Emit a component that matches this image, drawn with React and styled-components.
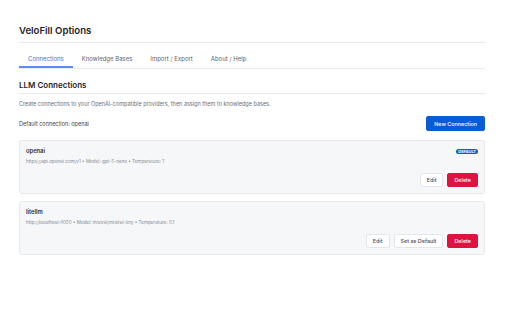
import React from 'react';
import styled, { createGlobalStyle } from 'styled-components';

const GlobalStyle = createGlobalStyle`
  body {
    margin: 0;
    background: #ffffff;
    font-family: Inter, "Noto Sans", "Liberation Sans", sans-serif;
    color: #1f2328;
  }
`;

const Page = styled.div`
  padding: 25px 27px 0 19px;
`;

const Title = styled.h1`
  margin: 0;
  font-size: 9.6px;
  line-height: 12px;
  font-weight: 600;
  color: #1f2328;
  padding-bottom: 5px;
  border-bottom: 1px solid #e8eaed;
`;

const Tabs = styled.nav`
  display: flex;
  margin-top: 8px;
  border-bottom: 1px solid #e8eaed;
`;

const Tab = styled.button`
  border: none;
  background: none;
  font-family: inherit;
  font-size: 6px;
  line-height: 8px;
  padding: 4px 9px 3px;
  color: ${(p) => (p.$active ? '#3b73e6' : '#5f6368')};
  border-bottom: 2px solid ${(p) => (p.$active ? '#5b8def' : 'transparent')};
  cursor: pointer;
`;

const Heading = styled.h2`
  margin: 11px 0 0;
  font-size: 8px;
  line-height: 10px;
  font-weight: 600;
  color: #1f2328;
  padding-bottom: 3px;
  border-bottom: 1px solid #e8eaed;
`;

const Description = styled.p`
  margin: 6px 0 0;
  font-size: 5.5px;
  line-height: 8px;
  color: #6b7078;
`;

const DefaultRow = styled.div`
  display: flex;
  align-items: center;
  justify-content: space-between;
  margin-top: 8px;
`;

const DefaultLabel = styled.span`
  font-size: 5.5px;
  color: #3c4046;
`;

const Button = styled.button`
  height: ${(p) => (p.$tall ? '15px' : '14px')};
  padding: 0 ${(p) => (p.$tall ? '7px' : '6px')};
  border-radius: 2px;
  font-family: inherit;
  font-size: 5.4px;
  font-weight: 500;
  cursor: pointer;
  border: 1px solid
    ${(p) =>
      p.$variant === 'primary' ? '#0a5bd8' : p.$variant === 'danger' ? '#e0123f' : '#e3e6ea'};
  background: ${(p) =>
    p.$variant === 'primary' ? '#0a5bd8' : p.$variant === 'danger' ? '#e0123f' : '#ffffff'};
  color: ${(p) => (p.$variant ? '#ffffff' : '#4a4f56')};
`;

const List = styled.div`
  display: flex;
  flex-direction: column;
  gap: 7px;
  margin-top: 9px;
`;

const Card = styled.article`
  background: #f6f7f9;
  border: 1px solid #e6e8ec;
  border-radius: 3px;
  padding: 6px;
  display: flex;
  flex-direction: column;
`;

const CardHeader = styled.div`
  display: flex;
  align-items: center;
  justify-content: space-between;
`;

const CardTitle = styled.h3`
  margin: 0;
  font-size: 5.8px;
  line-height: 8px;
  font-weight: 600;
  color: #2b2f35;
`;

const Badge = styled.span`
  background: #0a5bd8;
  color: #ffffff;
  font-size: 4px;
  line-height: 5px;
  font-weight: 700;
  padding: 0 2px;
  border-radius: 3px;
`;

const Meta = styled.div`
  margin-top: 3px;
  font-size: 4.6px;
  line-height: 7px;
  color: #868b93;
`;

const Actions = styled.div`
  display: flex;
  justify-content: flex-end;
  gap: 4px;
  margin-top: 8px;
`;

const connections = [
  {
    name: 'openai',
    meta: 'https://api.openai.com/v1 • Model: gpt-5-nano • Temperature: 1',
    isDefault: true,
  },
  {
    name: 'litellm',
    meta: 'http://localhost:4020 • Model: mistral/mistral-tiny • Temperature: 0.1',
    isDefault: false,
  },
];

export default function App() {
  return (
    <>
      <GlobalStyle />
      <Page>
        <Title>VeloFill Options</Title>
        <Tabs>
          <Tab $active>Connections</Tab>
          <Tab>Knowledge Bases</Tab>
          <Tab>Import / Export</Tab>
          <Tab>About / Help</Tab>
        </Tabs>

        <Heading>LLM Connections</Heading>
        <Description>
          Create connections to your OpenAI-compatible providers, then assign them to knowledge
          bases.
        </Description>

        <DefaultRow>
          <DefaultLabel>Default connection: openai</DefaultLabel>
          <Button $variant="primary" $tall>
            New Connection
          </Button>
        </DefaultRow>

        <List>
          {connections.map((c) => (
            <Card key={c.name}>
              <CardHeader>
                <CardTitle>{c.name}</CardTitle>
                {c.isDefault && <Badge>DEFAULT</Badge>}
              </CardHeader>
              <Meta>{c.meta}</Meta>
              <Actions>
                <Button>Edit</Button>
                {!c.isDefault && <Button>Set as Default</Button>}
                <Button $variant="danger">Delete</Button>
              </Actions>
            </Card>
          ))}
        </List>
      </Page>
    </>
  );
}
